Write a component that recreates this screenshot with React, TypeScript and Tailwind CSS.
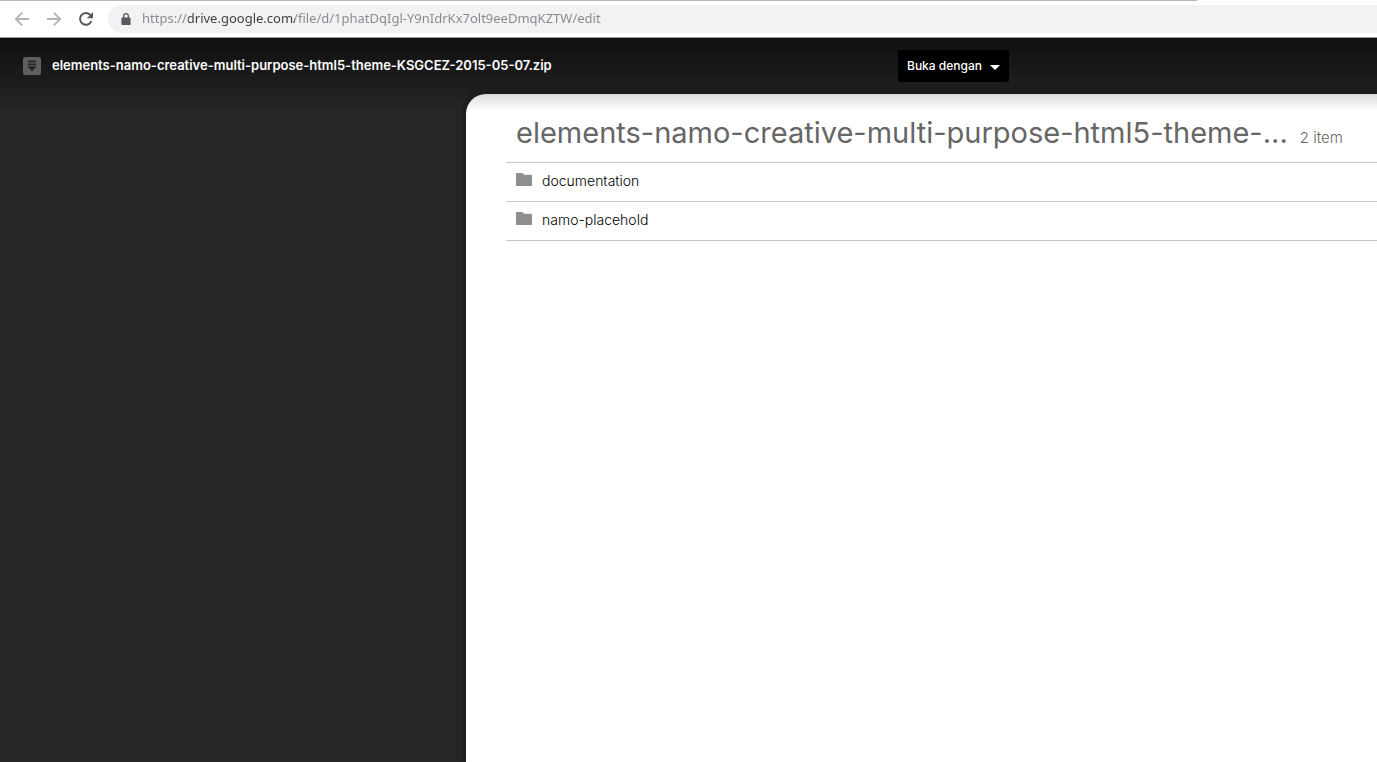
import { useState } from "react";

const FILE_NAME = "elements-namo-creative-multi-purpose-html5-theme-KSGCEZ-2015-05-07.zip";

const folders = [{ name: "documentation" }, { name: "namo-placehold" }];

function BackIcon() {
  return (
    <svg viewBox="0 0 16 16" className="w-4 h-4" fill="none" stroke="currentColor" strokeWidth="1.8">
      <path d="M15 8H2M8.2 1.6 1.8 8l6.4 6.4" />
    </svg>
  );
}

function ForwardIcon() {
  return (
    <svg viewBox="0 0 16 16" className="w-4 h-4" fill="none" stroke="currentColor" strokeWidth="1.8">
      <path d="M1 8h13M7.8 1.6 14.2 8l-6.4 6.4" />
    </svg>
  );
}

function ReloadIcon() {
  return (
    <svg viewBox="0 0 16 16" className="w-4 h-4" fill="none" stroke="currentColor" strokeWidth="2">
      <path d="M13.4 10.2A5.9 5.9 0 1 1 12.3 3.9L14 5.6" />
      <path d="M15 1v6.2H8.8z" fill="currentColor" stroke="none" />
    </svg>
  );
}

function LockIcon() {
  return (
    <svg viewBox="0 0 10 12" className="w-2.5 h-3 shrink-0" fill="currentColor">
      <path
        fillRule="evenodd"
        d="M2 4.4V3a3 3 0 0 1 6 0v1.4h.6c.6 0 1 .4 1 1V11c0 .6-.4 1-1 1H1.4c-.6 0-1-.4-1-1V5.4c0-.6.4-1 1-1zM3.3 4.4h3.4V3a1.7 1.7 0 0 0-3.4 0z"
      />
    </svg>
  );
}

function ArchiveIcon() {
  return (
    <svg viewBox="0 0 18 18" className="w-[18px] h-[18px] shrink-0">
      <rect width="18" height="18" rx="2" fill="#5f5f5f" />
      <path d="M5 3.4h8v1.8H5zM5 6.4h8v1.8H5zM5 9.4h8v1.8h-1.6L9 14.6l-2.4-3.4H5z" fill="#242424" />
    </svg>
  );
}

function FolderIcon() {
  return (
    <svg viewBox="0 0 16 13" className="w-4 h-[13px] shrink-0 mb-[3px]" fill="#8f8f8f">
      <path d="M1 0h5.5L8 1.7h7c.6 0 1 .4 1 1V12c0 .6-.4 1-1 1H1c-.6 0-1-.4-1-1V1c0-.6.4-1 1-1z" />
    </svg>
  );
}

function BrowserBar() {
  const [url, setUrl] = useState("https://drive.google.com/file/d/1phatDqIgl-Y9nIdrKx7olt9eeDmqKZTW/edit");

  return (
    <div className="bg-white border-b border-[#9a9a9a]">
      <div className="h-px mr-[180px] bg-[#b9b7b9]" />
      <div className="flex items-center h-9 pl-3.5">
        <div className="flex items-center gap-4 mr-3.5">
          <button aria-label="Back" className="text-[#b4b4b4]">
            <BackIcon />
          </button>
          <button aria-label="Forward" className="text-[#b4b4b4]">
            <ForwardIcon />
          </button>
          <button aria-label="Reload" className="text-[#5a5a5e]">
            <ReloadIcon />
          </button>
        </div>
        <div className="flex flex-1 items-center gap-[11px] h-7 pl-[13px] rounded-l-full bg-[#f1f2f3] text-[#5a5a5e]">
          <LockIcon />
          {/* host part is darker than the rest of the address */}
          <input
            aria-label="Address"
            value={url}
            onChange={(e) => setUrl(e.target.value)}
            className="flex-1 min-w-0 outline-none text-transparent bg-clip-text bg-[linear-gradient(90deg,#85888c_46px,#3a3b3f_46px,#3a3b3f_153px,#85888c_153px)] font-['Noto_Sans',sans-serif] text-[13px]"
          />
        </div>
      </div>
    </div>
  );
}

export default function App() {
  return (
    <div className="flex flex-col min-h-screen overflow-hidden bg-[#262626] font-['Inter',sans-serif]">
      <BrowserBar />
      <div className="flex flex-col flex-1 bg-linear-to-b from-[#0f0f0f] to-[#262626] to-[72px]">
        <header className="flex items-center justify-between h-14 pl-[23px] pr-[368px]">
          <div className="flex items-center gap-[11px] text-[13px] font-semibold text-white">
            <ArchiveIcon />
            <span className="whitespace-nowrap">{FILE_NAME}</span>
          </div>
          <button className="flex items-center gap-2 h-8 px-[9px] rounded-xs bg-black text-xs font-medium text-white whitespace-nowrap">
            Buka dengan
            <svg viewBox="0 0 10 5" className="w-2.5 h-[5px] mt-0.5" fill="currentColor">
              <path d="M0 0h10L5 5z" />
            </svg>
          </button>
        </header>
        <main className="flex-1 ml-[466px] pl-10 rounded-tl-[20px] bg-white bg-linear-to-b from-[#dadada] to-white to-[16px] shadow-[0_0_8px_#111]">
          <div className="flex items-baseline gap-3 h-[69px] pl-2.5 pt-[17px] border-b border-[#c8c8c8] text-[#666] whitespace-nowrap">
            <h1 className="text-[29px] leading-[44px]">elements-namo-creative-multi-purpose-html5-theme-...</h1>
            <span className="text-[15px] font-light">2 item</span>
          </div>
          <ul>
            {folders.map((folder) => (
              <li key={folder.name} className="border-b border-[#c8c8c8]">
                <button className="flex items-center gap-2.5 w-full h-[38px] pl-2.5 pb-0.5 text-left text-sm font-light text-black">
                  <FolderIcon />
                  {folder.name}
                </button>
              </li>
            ))}
          </ul>
        </main>
      </div>
    </div>
  );
}
